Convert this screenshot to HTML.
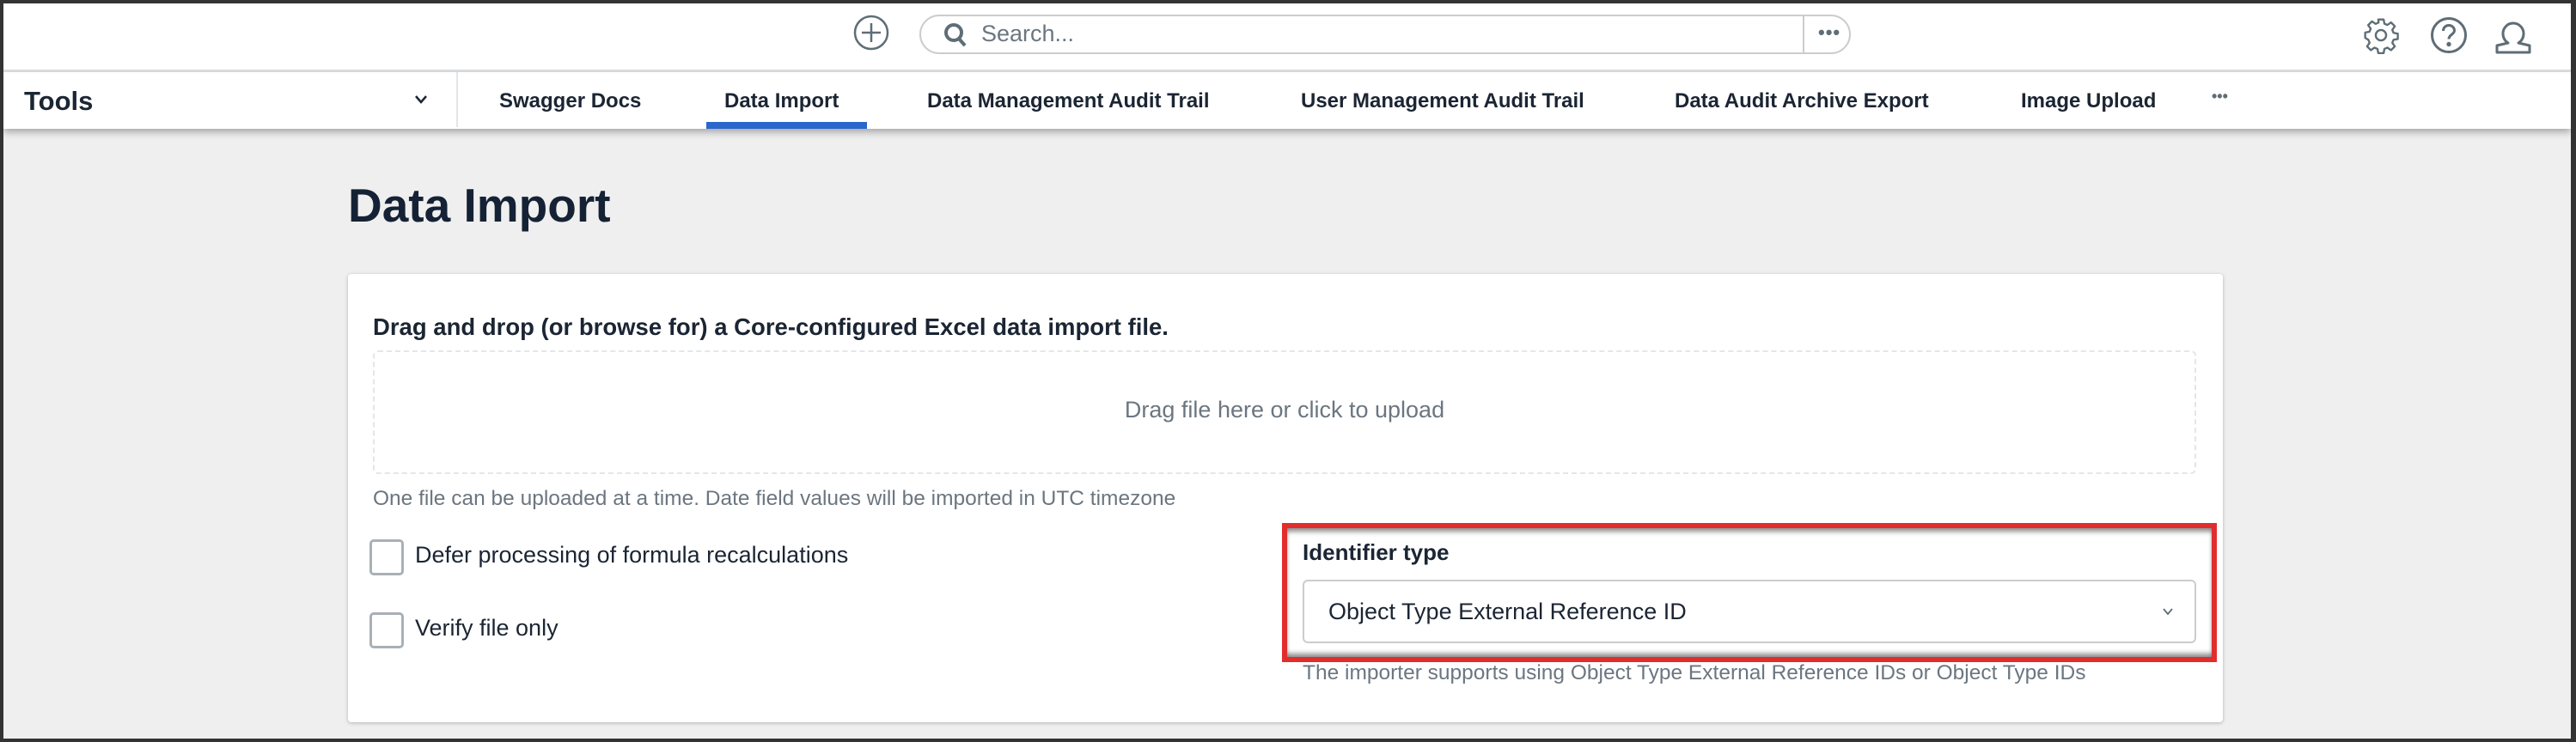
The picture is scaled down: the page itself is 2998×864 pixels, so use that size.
<!DOCTYPE html>
<html><head><meta charset="utf-8"><style>
*{box-sizing:border-box;margin:0;padding:0}
body{width:2998px;height:864px;overflow:hidden;background:#333;font-family:"Liberation Sans",sans-serif;color:#1b2533}
#frame{position:absolute;left:4px;top:4px;width:2988px;height:856px;background:#efefef;overflow:hidden}
.abs{position:absolute}
#top{left:0;top:0;width:100%;height:80px;background:#fff;border-bottom:3px solid #dde0e3}
#nav{left:0;top:80px;width:100%;height:66px;background:#fff;box-shadow:0 4px 8px rgba(0,0,0,.3)}
.ni{position:absolute;top:20px;font-size:24px;font-weight:bold;color:#1b2533;white-space:nowrap}
.card{left:401px;top:315px;width:2182px;height:522px;background:#fff;border-radius:4px;box-shadow:0 1px 4px rgba(0,0,0,.25)}
.g{color:#6b7680}
.cb{width:40px;height:42px;border:3px solid #a9b0b5;border-radius:5px;background:#fff}
</style></head><body><div id="frame">
<div id="top" class="abs">
 <svg class="abs" style="left:989px;top:13px" width="42" height="42" viewBox="0 0 42 42" fill="none" stroke="#5f6d76" stroke-width="2.5"><circle cx="21" cy="21" r="19"/><path d="M21 10v22M10 21h22"/></svg>
 <div class="abs" style="left:1066px;top:13px;width:1084px;height:46px;border:2px solid #ccc;border-radius:23px"></div>
 <div class="abs" style="left:2094px;top:15px;width:2px;height:42px;background:#ccc"></div>
 <div class="abs" style="left:2112px;top:21px;font-size:22px;font-weight:bold;color:#5f6d76;letter-spacing:1px">•••</div>
 <svg class="abs" style="left:1093px;top:21px" width="30" height="32" viewBox="0 0 30 32" fill="none" stroke="#5f6d76" stroke-width="4"><circle cx="13" cy="13" r="9"/><path d="M19 20l7 8"/></svg>
 <div class="abs g" style="left:1138px;top:20px;font-size:27px;color:#6b7680">Search...</div>
 <svg class="abs" style="left:2745px;top:15px" width="44" height="44" viewBox="0 0 24 24" fill="none" stroke="#5f6d76" stroke-width="1.3" stroke-linejoin="round"><path d="M10.3 2h3.4l.5 2.7 1.9.8 2.3-1.6 2.4 2.4-1.6 2.3.8 1.9 2.7.5v3.4l-2.7.5-.8 1.9 1.6 2.3-2.4 2.4-2.300-1.6-1.9.8-.5 2.7h-3.4l-.5-2.7-1.9-.8-2.3 1.6-2.4-2.4 1.6-2.3-.8-1.9L2 13.7v-3.4l2.7-.5.8-1.9-1.6-2.3 2.4-2.4 2.3 1.6 1.9-.8z"/><circle cx="12" cy="12" r="3.3"/></svg>
 <svg class="abs" style="left:2824px;top:15px" width="44" height="44" viewBox="0 0 44 44" fill="none" stroke="#5f6d76" stroke-width="3"><circle cx="22" cy="22" r="19.5"/><path d="M15.5 17c0-4 3-6.5 6.5-6.5s6.5 2.5 6.5 6c0 4.5-6.5 5-6.5 10"/><circle cx="22" cy="32.5" r="1.2" fill="#5f6d76"/></svg>
 <svg class="abs" style="left:2899px;top:14px" width="44" height="46" viewBox="0 0 44 46" fill="none" stroke="#5f6d76" stroke-width="3" stroke-linejoin="round"><path d="M16 32c-4-2.5-6-6.5-6-11a12 12 0 0124 0c0 4.5-2 8.5-6 11l13 3v8H3v-8z"/></svg>
</div>
<div id="nav" class="abs">
 <div class="abs" style="left:24px;top:16px;font-size:31px;font-weight:bold">Tools</div>
 <svg class="abs" style="left:477px;top:24px" width="18" height="16" viewBox="0 0 18 16" fill="none" stroke="#1b2533" stroke-width="2.5"><path d="M3 4l6 7 6-7"/></svg>
 <div class="abs" style="left:527px;top:0;width:2px;height:64px;background:#e3e5e7"></div>
 <div class="ni" style="left:577px">Swagger Docs</div>
 <div class="ni" style="left:839px">Data Import</div>
 <div class="abs" style="left:818px;top:58px;width:187px;height:8px;background:#2a67cc"></div>
 <div class="ni" style="left:1075px">Data Management Audit Trail</div>
 <div class="ni" style="left:1510px">User Management Audit Trail</div>
 <div class="ni" style="left:1945px">Data Audit Archive Export</div>
 <div class="ni" style="left:2348px">Image Upload</div>
 <div class="ni" style="left:2570px;top:18px;font-size:18px;color:#5f6d76">•••</div>
</div>
<div class="abs" style="left:401px;top:203px;font-size:55px;font-weight:bold;color:#152235">Data Import</div>
<div class="abs card">
 <div class="abs" style="left:29px;top:46px;font-size:27.5px;font-weight:bold">Drag and drop (or browse for) a Core-configured Excel data import file.</div>
 <div class="abs" style="left:29px;top:89px;width:2122px;height:144px;border:2px dashed #e4e6e8;border-radius:6px"></div>
 <div class="abs g" style="left:29px;top:143px;width:2122px;text-align:center;font-size:27px">Drag file here or click to upload</div>
 <div class="abs g" style="left:29px;top:248px;font-size:24.5px">One file can be uploaded at a time. Date field values will be imported in UTC timezone</div>
 <div class="abs cb" style="left:25px;top:309px"></div>
 <div class="abs" style="left:78px;top:312px;font-size:27px">Defer processing of formula recalculations</div>
 <div class="abs cb" style="left:25px;top:394px"></div>
 <div class="abs" style="left:78px;top:397px;font-size:27px">Verify file only</div>
 <div class="abs" style="left:1087px;top:290px;width:1088px;height:162px;border:6px solid #e22d2d;background:#fff;box-shadow:inset 0 6px 6px -2px rgba(0,0,0,.45),inset 0 -6px 6px -2px rgba(0,0,0,.45)"></div>
 <div class="abs" style="left:1111px;top:309px;font-size:26px;font-weight:bold">Identifier type</div>
 <div class="abs" style="left:1111px;top:356px;width:1040px;height:74px;border:2px solid #ccc;border-radius:6px;background:#fff"></div>
 <div class="abs" style="left:1141px;top:378px;font-size:27px">Object Type External Reference ID</div>
 <svg class="abs" style="left:2111px;top:387px" width="14" height="12" viewBox="0 0 14 12" fill="none" stroke="#5f6d76" stroke-width="1.8"><path d="M2 3l5 6 5-6"/></svg>
 <div class="abs g" style="left:1111px;top:451px;font-size:24.5px">The importer supports using Object Type External Reference IDs or Object Type IDs</div>
</div>
</div></body></html>
